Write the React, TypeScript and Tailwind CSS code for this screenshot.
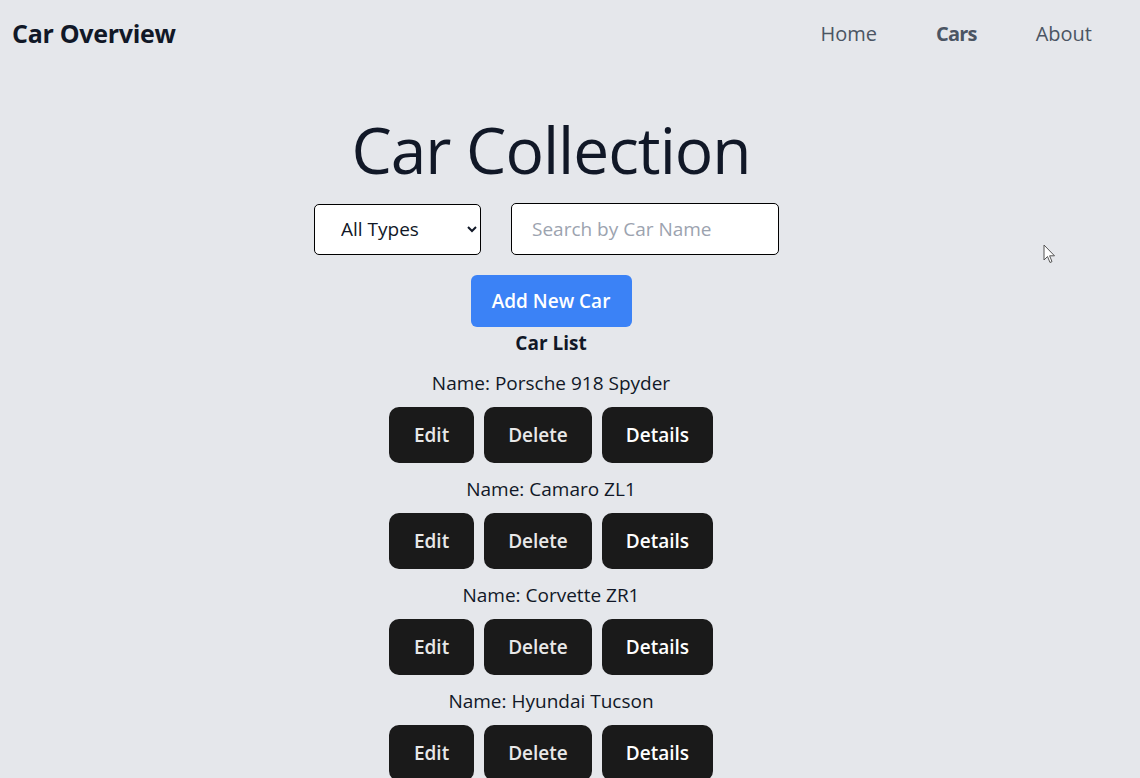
import React from "react";

const cars = ["Porsche 918 Spyder", "Camaro ZL1", "Corvette ZR1", "Hyundai Tucson"];

function Cursor() {
  return (
    <svg className="absolute left-[1043px] top-[244px]" width="13" height="20" viewBox="0 0 13 20">
      <path d="M1 1 L1 16 L4.5 12.5 L7 18.5 L9 17.6 L6.6 11.8 L11.5 11.8 Z" fill="#fff" stroke="#555" strokeWidth="1" strokeLinejoin="round" />
    </svg>
  );
}

export default function App() {
  return (
    <div className="relative min-h-screen bg-[#e5e7eb] text-[#111827] overflow-hidden" style={{ fontFamily: '"Open Sans", sans-serif' }}>
      {/* Navbar */}
      <nav className="flex items-center justify-between h-[68px] px-3">
        <h2 className="text-[25px] font-bold tracking-[-0.3px]">Car Overview</h2>
        <ul className="flex items-center gap-[59px] mr-[36px] text-[20px] text-[#4b5563]">
          <li className="font-medium">Home</li>
          <li className="font-bold tracking-[-0.8px]">Cars</li>
          <li className="font-medium">About</li>
        </ul>
      </nav>

      <main className="flex flex-col items-center pr-[38px]">
        <h1 className="text-[64px] leading-none mt-[50px] font-normal tracking-[-1px]">Car Collection</h1>

        <div className="flex items-center gap-[30px] mt-[21px] mr-[9px]">
          <select className="w-[167px] h-[51px] px-[22px] bg-white border border-black rounded-[5px] text-[19px]">
            <option>All Types</option>
          </select>
          <input
            className="w-[268px] h-[52px] px-5 bg-white border border-black rounded-[5px] text-[19px] placeholder:text-[#9ca3af]"
            placeholder="Search by Car Name"
          />
        </div>

        <button className="mt-[20px] w-[161px] h-[52px] bg-[#3b82f6] text-white font-semibold text-[19px] rounded-[6px]">
          Add New Car
        </button>

        <h3 className="mt-[3px] text-[19px] font-bold leading-[27px]">Car List</h3>

        <ul className="flex flex-col items-center">
          {cars.map((c) => (
            <li key={c} className="flex flex-col items-center">
              <p className="mt-[11px] text-[19px] leading-[30px]">Name: {c}</p>
              <div className="flex gap-[10px] mt-[9px]">
                <button className="h-[56px] px-[25px] bg-[#1a1a1a] rounded-[10px] text-[19px] font-semibold text-[#e8e8e8]">Edit</button>
                <button className="h-[56px] px-6 bg-[#1a1a1a] rounded-[10px] text-[19px] font-semibold text-[#e8e8e8]">Delete</button>
                <button className="h-[56px] px-6 bg-[#1a1a1a] rounded-[10px] text-[19px] font-semibold text-white">Details</button>
              </div>
            </li>
          ))}
        </ul>
      </main>
      <Cursor />
    </div>
  );
}
